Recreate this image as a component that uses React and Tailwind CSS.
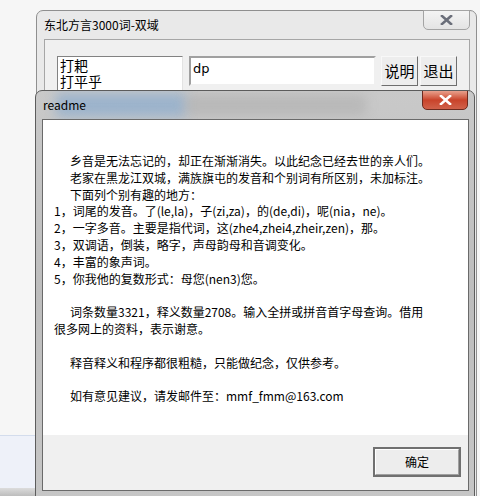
const cjk = { fontFamily: '"Microsoft YaHei", "Noto Sans CJK SC", "Noto Sans", sans-serif' };

const lines = [
  { t: '乡音是无法忘记的，却正在渐渐消失。以此纪念已经去世的亲人们。', indent: true },
  { t: '老家在黑龙江双城，满族旗屯的发音和个别词有所区别，未加标注。', indent: true },
  { t: '下面列个别有趣的地方：', indent: true },
  { t: '1，词尾的发音。了(le,la)，子(zi,za)，的(de,di)，呢(nia，ne)。' },
  { t: '2，一字多音。主要是指代词，这(zhe4,zhei4,zheir,zen)，那。' },
  { t: '3，双调语，倒装，略字，声母韵母和音调变化。' },
  { t: '4，丰富的象声词。' },
  { t: '5，你我他的复数形式：母您(nen3)您。' },
  { t: '' },
  { t: '词条数量3321，释义数量2708。输入全拼或拼音首字母查询。借用', indent: true },
  { t: '很多网上的资料，表示谢意。' },
  { t: '' },
  { t: '释音释义和程序都很粗糙，只能做纪念，仅供参考。', indent: true },
  { t: '' },
  { t: '如有意见建议，请发邮件至：mmf_fmm@163.com', indent: true },
];

function CloseX({ color = '#5a5f6b' }) {
  return (
    <svg width="13" height="10" viewBox="0 0 13 10">
      <path d="M2 1 L11 9 M11 1 L2 9" stroke={color} strokeWidth="2.6" strokeLinecap="square" />
    </svg>
  );
}

const raised = 'w-[37px] h-[30px] border border-[#f8f8f8] border-r-[#6e6e6e] border-b-[#6e6e6e] bg-[#ededed] flex items-center justify-center text-[15px] text-black';

function MainWindow() {
  return (
    <div className="absolute left-[36px] top-[10px] w-[441px] h-[500px] rounded-t-[7px] border border-[#8f8f8f] bg-[#e9e9e9] flex flex-col" style={cjk}>
      <div className="relative h-[28px] flex items-center px-[7px] text-[12px] text-black">
        东北方言3000词-双域
        <div className="absolute right-[6px] top-[-1px] w-[47px] h-[20px] rounded-b-[5px] border border-[#a4a4a4] bg-gradient-to-b from-[#f4f4f4] to-[#e4e4e4] flex items-center justify-center">
          <CloseX color="#6b6f7a" />
        </div>
      </div>
      <div className="flex-1 ml-[7px] mr-[6px] border border-[#a6a6a6] bg-[#f0f0f0] pt-[16px] pl-[12px] flex items-start gap-[6px]">
        <div className="w-[126px] h-[60px] border border-[#828282] border-r-[#e3e3e3] border-b-[#e3e3e3] bg-white px-[2px] text-[14px] leading-[16px] text-black">
          <div>打耙</div>
          <div>打平乎</div>
        </div>
        <div className="w-[187px] h-[30px] border-2 border-[#a0a0a0] border-r-[#f0f0f0] border-b-[#f0f0f0] bg-white px-[2px] pt-[3px] text-[13px] leading-[16px] text-black" style={{ fontFamily: '"DejaVu Sans", sans-serif' }}>
          dp
        </div>
        <div className="ml-[-1px] flex gap-[2px]">
          <div className={raised}>说明</div>
          <div className={raised}>退出</div>
        </div>
      </div>
    </div>
  );
}

function Readme() {
  return (
    <div className="absolute left-[35px] top-[90px] w-[440px] h-[410px] rounded-t-[7px] border border-[#5c5c5c] bg-gradient-to-b from-[#c9c9c9] via-[#bdbdbd] to-[#c6c6c6] overflow-hidden flex flex-col" style={cjk}>
      <div className="absolute left-[20px] top-[2px] w-[130px] h-[24px] bg-[#7fa6cf] blur-[6px] opacity-60" />
      <div className="absolute left-[150px] top-[4px] w-[180px] h-[20px] bg-[#a9a9a9] blur-[6px] opacity-50" />
      <div className="relative h-[28px] flex items-center px-[7px] text-[12px] text-black">
        readme
        <div className="absolute right-[6px] top-[-1px] w-[46px] h-[20px] rounded-b-[5px] border border-[#6e2a1e] bg-gradient-to-b from-[#e8a08c] via-[#c9432a] to-[#d0614a] flex items-center justify-center">
          <CloseX color="#ffffff" />
        </div>
      </div>
      <div className="relative mx-[6px] w-[427px] h-[372px] border border-[#6a6a6a] bg-[#f0f0f0] flex flex-col">
        <div className="h-[315px] bg-white pl-[11px] pt-[33px] text-[12px] leading-[16.8px] text-black whitespace-pre">
          {lines.map((l, i) => (
            <div key={i} className={l.indent ? 'pl-[16px] h-[16.8px]' : 'h-[16.8px]'}>{l.t}</div>
          ))}
        </div>
        <div className="flex-1 flex justify-end items-start pt-[12px] pr-[7px]">
          <div className="relative w-[88px] h-[30px] border-2 border-[#707070] bg-[#ededed] flex items-center justify-center text-[12px] text-black">
            <div className="absolute inset-0 border border-white border-r-[#a0a0a0] border-b-[#a0a0a0]" />
            <span className="relative">确定</span>
          </div>
        </div>
      </div>
    </div>
  );
}

export default function App() {
  return (
    <div className="relative w-[480px] h-[496px] overflow-hidden bg-[#f6f6f6]">
      <div className="absolute left-0 top-[435px] w-[40px] flex flex-col">
        <div className="h-[53px] border-t border-[#d3dcec] bg-[#eef1f9]" />
        <div className="h-[8px] bg-gradient-to-b from-[#dcdcdc] to-[#bdbdbd]" />
      </div>
      <MainWindow />
      <Readme />
    </div>
  );
}
